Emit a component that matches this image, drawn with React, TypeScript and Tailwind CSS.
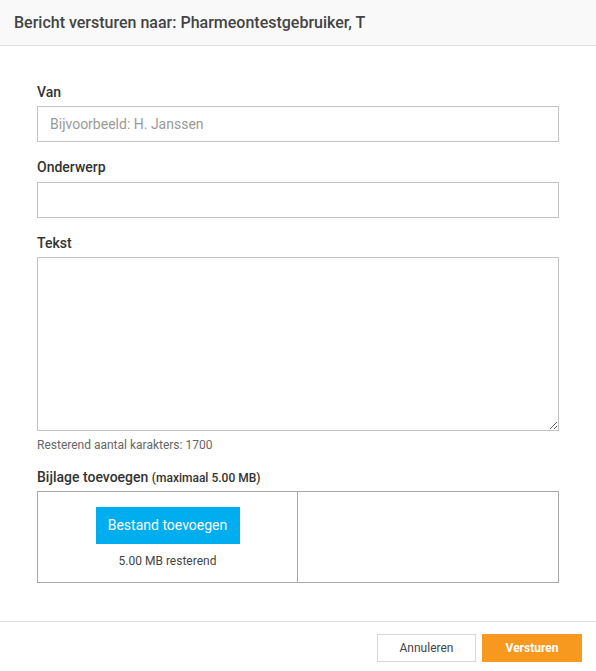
import React from 'react';

export default function App() {
  return (
    <div className="w-[596px] h-[671px] bg-white flex flex-col font-['Roboto',sans-serif] text-[#333]">
      {/* Header */}
      <div className="h-[46px] bg-[#f9f9f9] border-b border-[#dddddd] flex items-center px-[14px]">
        <h2 className="text-[16px] font-medium text-[#444]">Bericht versturen naar: Pharmeontestgebruiker, T</h2>
      </div>

      {/* Body */}
      <div className="flex-1 px-[37px] pt-[36px]">
        <label className="block text-[14px] font-medium leading-[20px] text-[#333]">Van</label>
        <input
          className="mt-[4px] block w-full h-[36px] border border-[#c4c4c4] px-[12px] text-[14px] text-[#333] placeholder:text-[#9a9a9a] outline-none"
          placeholder="Bijvoorbeeld: H. Janssen"
        />

        <label className="block mt-[15px] text-[14px] font-medium leading-[20px] text-[#333]">Onderwerp</label>
        <input className="mt-[5px] block w-full h-[36px] border border-[#c4c4c4] px-[12px] text-[14px] outline-none" />

        <label className="block mt-[15px] text-[14px] font-medium leading-[20px] text-[#333]">Tekst</label>
        <textarea className="mt-[4px] block w-full h-[174px] border border-[#c4c4c4] px-[12px] py-[8px] text-[14px] outline-none resize-y" />
        <p className="mt-[6px] text-[12px] leading-[16px] text-[#666]">Resterend aantal karakters: 1700</p>

        <p className="mt-[14px] text-[14px] font-medium leading-[20px] text-[#333]">
          Bijlage toevoegen <span className="text-[12px]">(maximaal 5.00 MB)</span>
        </p>
        <div className="mt-[3px] h-[92px] border border-[#a9a9a9] grid grid-cols-2">
          <div className="border-r border-[#a9a9a9] flex flex-col items-center pt-[15px]">
            <button className="w-[144px] h-[37px] bg-[#00adef] text-white text-[14px]">Bestand toevoegen</button>
            <span className="mt-[8px] text-[12px] text-[#444]">5.00 MB resterend</span>
          </div>
          <div />
        </div>
      </div>

      {/* Footer */}
      <div className="h-[50px] border-t border-[#dddddd] flex items-start justify-end gap-[6px] pr-[14px] pt-[12px]">
        <button className="w-[99px] h-[28px] border border-[#d9d9d9] bg-white text-[12px] text-[#444]">Annuleren</button>
        <button className="w-[100px] h-[28px] bg-[#f7981f] text-white text-[12px] font-bold">Versturen</button>
      </div>
    </div>
  );
}
